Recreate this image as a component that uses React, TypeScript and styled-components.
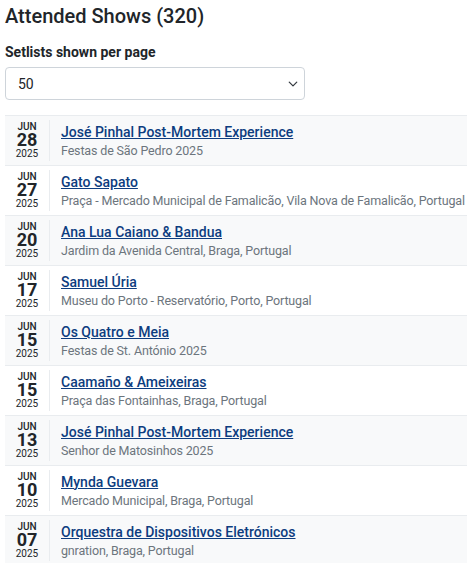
import React from "react";
import styled, { createGlobalStyle } from "styled-components";

const Global = createGlobalStyle`
  html, body { margin: 0; padding: 0; background: #fff; }
  body { font-family: Roboto, "Noto Sans", Arial, sans-serif; color: #212529; }
  * { box-sizing: border-box; }
`;

const Page = styled.div`
  padding: 0 0 0 5px;
  width: 467px;
  overflow: hidden;
`;

const Title = styled.h2`
  margin: 0;
  padding-top: 3px;
  font-size: 20px;
  font-weight: 500;
  line-height: 26px;
  color: #212529;
`;

const Label = styled.label`
  display: block;
  margin-top: 14px;
  font-size: 14px;
  font-weight: 700;
  line-height: 18px;
  color: #212529;
`;

const SelectBox = styled.div`
  position: relative;
  margin-top: 6px;
  width: 300px;
  height: 33px;
  border: 1px solid #ced4da;
  border-radius: 4px;
  display: flex;
  align-items: center;
  padding: 0 12px;
  font-size: 14px;
  color: #212529;
`;

const Chevron = styled.svg`
  position: absolute;
  right: 6px;
  top: 50%;
  margin-top: -5px;
`;

const List = styled.ul`
  list-style: none;
  margin: 15px 0 0 0;
  padding: 0;
  border-top: 1px solid #e9ecef;
`;

const Row = styled.li<{ $odd: boolean }>`
  display: flex;
  align-items: center;
  height: 50px;
  border-bottom: 1px solid #e9ecef;
  background: ${(p) => (p.$odd ? "#f8f9fa" : "#fff")};
`;

const DateCol = styled.div`
  flex: 0 0 45px;
  display: flex;
  flex-direction: column;
  align-items: center;
  border-right: 1px solid #e9ecef;
  padding: 2px 0;
  color: #212529;
`;

const Month = styled.span`
  font-size: 10px;
  font-weight: 500;
  line-height: 10px;
`;

const Day = styled.span`
  font-size: 18px;
  font-weight: 700;
  line-height: 16px;
`;

const Year = styled.span`
  font-size: 10px;
  line-height: 11px;
`;

const Info = styled.div`
  flex: 1 1 auto;
  min-width: 0;
  padding-left: 11px;
  display: flex;
  flex-direction: column;
  white-space: nowrap;
  overflow: hidden;
`;

const ShowLink = styled.a`
  align-self: flex-start;
  font-size: 14px;
  font-weight: 500;
  line-height: 19px;
  color: #0d3d80;
  text-decoration: underline;
`;

const Venue = styled.span`
  font-size: 12.5px;
  letter-spacing: -0.15px;
  line-height: 17px;
  color: #6c757d;
`;

const shows = [
  ["28", "José Pinhal Post-Mortem Experience", "Festas de São Pedro 2025"],
  ["27", "Gato Sapato", "Praça - Mercado Municipal de Famalicão, Vila Nova de Famalicão, Portugal"],
  ["20", "Ana Lua Caiano & Bandua", "Jardim da Avenida Central, Braga, Portugal"],
  ["17", "Samuel Úria", "Museu do Porto - Reservatório, Porto, Portugal"],
  ["15", "Os Quatro e Meia", "Festas de St. António 2025"],
  ["15", "Caamaño & Ameixeiras", "Praça das Fontainhas, Braga, Portugal"],
  ["13", "José Pinhal Post-Mortem Experience", "Senhor de Matosinhos 2025"],
  ["10", "Mynda Guevara", "Mercado Municipal, Braga, Portugal"],
  ["07", "Orquestra de Dispositivos Eletrónicos", "gnration, Braga, Portugal"],
];

export default function App() {
  return (
    <Page>
      <Global />
      <Title>Attended Shows (320)</Title>
      <Label>Setlists shown per page</Label>
      <SelectBox>
        50
        <Chevron width="10" height="10" viewBox="0 0 16 16">
          <path d="M2 5l6 6 6-6" fill="none" stroke="#343a40" strokeWidth="2" strokeLinecap="round" strokeLinejoin="round" />
        </Chevron>
      </SelectBox>
      <List>
        {shows.map(([d, t, v], i) => (
          <Row key={i} $odd={i % 2 === 0}>
            <DateCol>
              <Month>JUN</Month>
              <Day>{d}</Day>
              <Year>2025</Year>
            </DateCol>
            <Info>
              <ShowLink href="#">{t}</ShowLink>
              <Venue>{v}</Venue>
            </Info>
          </Row>
        ))}
      </List>
    </Page>
  );
}
